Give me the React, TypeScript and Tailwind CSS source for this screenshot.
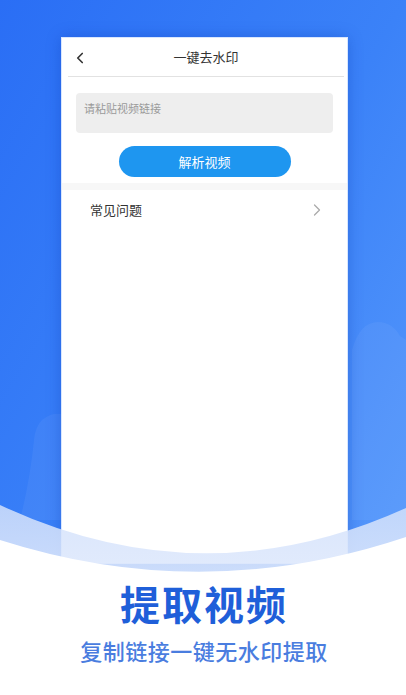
import { ChevronLeft, ChevronRight } from 'lucide-react';

const cjk = { fontFamily: '"Noto Sans CJK SC", "Noto Sans", sans-serif' };

function Wave() {
  return (
    <svg
      className="pointer-events-none absolute left-0 top-0 z-10"
      width="406"
      height="695"
      viewBox="0 0 406 695"
    >
      <defs>
        <linearGradient id="band" x1="0" y1="0" x2="0" y2="1">
          <stop offset="0" stopColor="#d3e1fb" stopOpacity="0.85" />
          <stop offset="1" stopColor="#f1f5fe" stopOpacity="0.95" />
        </linearGradient>
      </defs>
      <path d="M0 505 Q203 600 406 508 L406 695 L0 695 Z" fill="url(#band)" />
      <path d="M0 540 Q203 605 406 537 L406 695 L0 695 Z" fill="#ffffff" />
    </svg>
  );
}

function Clouds() {
  return (
    <svg
      className="pointer-events-none absolute left-0 top-0"
      width="406"
      height="695"
      viewBox="0 0 406 695"
    >
      <path
        d="M352 350 Q360 322 378 322 Q392 322 400 336 L406 340 L406 520 L352 520 Z"
        fill="#ffffff"
        fillOpacity="0.05"
      />
      <path
        d="M34 440 Q36 418 54 414 L62 414 L62 520 L20 520 Q30 480 34 440 Z"
        fill="#ffffff"
        fillOpacity="0.05"
      />
    </svg>
  );
}

export default function App() {
  return (
    <div
      className="relative h-[695px] w-full overflow-hidden bg-gradient-to-br from-[#2a6ef5] via-[#3b82f8] to-[#5c9dfc]"
      style={cjk}
    >
      <Clouds />
      <div className="relative flex flex-col">
        <div className="ml-[62px] mt-[38px] flex h-[525px] w-[285px] flex-col bg-white shadow-[0_0_14px_rgba(10,50,170,0.35)] ring-1 ring-[#d8e6fe]">
          <header className="relative ml-[6px] mr-[3px] flex h-[39px] items-center justify-center border-b border-[#e2e2e2]">
            <ChevronLeft
              className="absolute left-[3px] top-[11px] text-[#333]"
              size={18}
              strokeWidth={2.2}
            />
            <span className="text-[13px] text-[#333]">一键去水印</span>
          </header>

          <div className="mx-[14px] mt-[16px] h-[40px] rounded-sm bg-[#eeeeee] px-[8px] pt-[7px] text-[11px] text-[#9a9a9a]">
            请粘贴视频链接
          </div>

          <button className="mx-auto mt-[13px] flex h-[31px] w-[172px] items-center justify-center rounded-full bg-[#1e96f0] text-[13px] text-white">
            解析视频
          </button>

          <div className="mt-[6px] h-[7px] bg-[#f7f7f7]" />

          <div className="flex h-[40px] items-center justify-between pl-[28px] pr-[20px]">
            <span className="text-[13px] text-[#333]">常见问题</span>
            <ChevronRight className="text-[#aaaaaa]" size={20} strokeWidth={1.5} />
          </div>
        </div>

        <div className="relative z-20 mt-[16px] flex flex-col items-center">
          <h1 className="pl-[2px] text-[40px] font-bold leading-[48px] tracking-[2px] text-[#1f5fd9]">
            提取视频
          </h1>
          <p className="mt-[8px] pl-[2px] text-[22px] font-medium leading-[30px] tracking-[0.5px] text-[#4a7ddf]">
            复制链接一键无水印提取
          </p>
        </div>
      </div>
      <Wave />
    </div>
  );
}
